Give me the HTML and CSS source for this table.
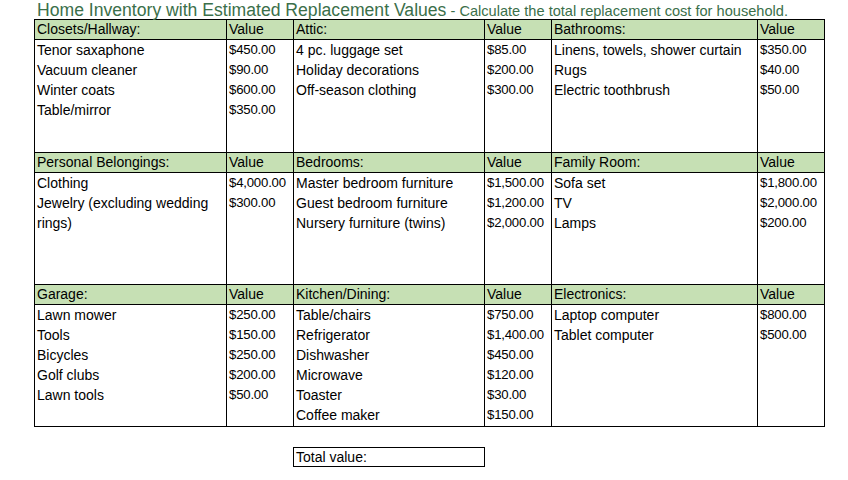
FILE: index.html
```html
<!DOCTYPE html>
<html lang="en">
<head>
<meta charset="utf-8">
<title>Home Inventory</title>
<link rel="stylesheet" href="styles.css">
</head>
<body>
<div class="sheet">
  <h1 class="title"><span class="title-main">Home Inventory with Estimated Replacement Values</span><span class="title-sub">&nbsp;- Calculate the total replacement cost for household.</span></h1>
  <table class="inv">
    <colgroup>
      <col class="c-item1"><col class="c-val"><col class="c-item2"><col class="c-val"><col class="c-item3"><col class="c-val">
    </colgroup>
    <tr class="head">
      <td>Closets/Hallway:</td><td>Value</td><td>Attic:</td><td>Value</td><td>Bathrooms:</td><td>Value</td>
    </tr>
    <tr class="body b1">
      <td><div>Tenor saxaphone</div><div>Vacuum cleaner</div><div>Winter coats</div><div>Table/mirror</div></td>
      <td><div>$450.00</div><div>$90.00</div><div>$600.00</div><div>$350.00</div></td>
      <td><div>4 pc. luggage set</div><div>Holiday decorations</div><div>Off-season clothing</div></td>
      <td><div>$85.00</div><div>$200.00</div><div>$300.00</div></td>
      <td><div>Linens, towels, shower curtain</div><div>Rugs</div><div>Electric toothbrush</div></td>
      <td><div>$350.00</div><div>$40.00</div><div>$50.00</div></td>
    </tr>
    <tr class="head">
      <td>Personal Belongings:</td><td>Value</td><td>Bedrooms:</td><td>Value</td><td>Family Room:</td><td>Value</td>
    </tr>
    <tr class="body b2">
      <td><div>Clothing</div><div>Jewelry (excluding wedding</div><div>rings)</div></td>
      <td><div>$4,000.00</div><div>$300.00</div></td>
      <td><div>Master bedroom furniture</div><div>Guest bedroom furniture</div><div>Nursery furniture (twins)</div></td>
      <td><div>$1,500.00</div><div>$1,200.00</div><div>$2,000.00</div></td>
      <td><div>Sofa set</div><div>TV</div><div>Lamps</div></td>
      <td><div>$1,800.00</div><div>$2,000.00</div><div>$200.00</div></td>
    </tr>
    <tr class="head">
      <td>Garage:</td><td>Value</td><td>Kitchen/Dining:</td><td>Value</td><td>Electronics:</td><td>Value</td>
    </tr>
    <tr class="body b3">
      <td><div>Lawn mower</div><div>Tools</div><div>Bicycles</div><div>Golf clubs</div><div>Lawn tools</div></td>
      <td><div>$250.00</div><div>$150.00</div><div>$250.00</div><div>$200.00</div><div>$50.00</div></td>
      <td><div>Table/chairs</div><div>Refrigerator</div><div>Dishwasher</div><div>Microwave</div><div>Toaster</div><div>Coffee maker</div></td>
      <td><div>$750.00</div><div>$1,400.00</div><div>$450.00</div><div>$120.00</div><div>$30.00</div><div>$150.00</div></td>
      <td><div>Laptop computer</div><div>Tablet computer</div></td>
      <td><div>$800.00</div><div>$500.00</div></td>
    </tr>
    <tr class="spacer"><td colspan="6"></td></tr>
    <tr class="total">
      <td class="blank" colspan="2"></td>
      <td class="total-cell">Total value:</td>
      <td class="blank" colspan="3"></td>
    </tr>
  </table>
</div>
</body>
</html>
```

FILE: styles.css
```css
html, body {
  margin: 0;
  padding: 0;
  background: #ffffff;
}

.sheet {
  padding-left: 34px;
  font-family: "Liberation Sans", Arial, sans-serif;
  color: #000;
}

.title {
  margin: 0;
  height: 17px;
  padding: 2px 0 0 3px;
  display: flex;
  align-items: baseline;
  font-weight: normal;
  color: #3b6f4a;
  white-space: nowrap;
  line-height: 17px;
}

.title-main {
  font-size: 17.6px;
  line-height: 17px;
}

.title-sub {
  font-size: 14.6px;
  line-height: 17px;
}

.inv {
  border-collapse: collapse;
  table-layout: fixed;
  width: 789px;
  font-size: 14px;
}

.c-item1 { width: 192px; }
.c-item2 { width: 191px; }
.c-item3 { width: 206px; }
.c-val { width: 67px; }

.inv td {
  border: 1px solid #000;
  padding: 0 0 0 2px;
  white-space: nowrap;
  overflow: hidden;
}

.head td {
  background: #c6e0b4;
  height: 19px;
  line-height: 19px;
}

.body td {
  vertical-align: top;
}

.body td:nth-child(even) {
  font-size: 13.2px;
  letter-spacing: -0.2px;
}

.body td div {
  height: 20px;
  line-height: 20px;
}

.b1 td { height: 112px; }
.b2 td { height: 111px; }
.b3 td { height: 121px; }

.spacer td {
  border: none;
  border-top: 1px solid #000;
  height: 20px;
  padding: 0;
}

.total td.blank {
  border: none;
}

.total td.total-cell {
  height: 18px;
  line-height: 18px;
}
```
